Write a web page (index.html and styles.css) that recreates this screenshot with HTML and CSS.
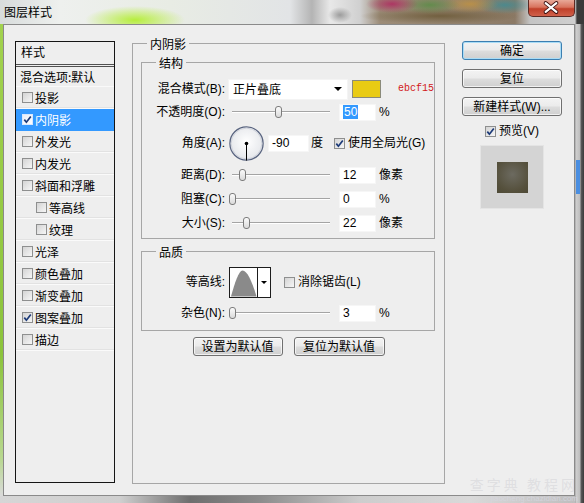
FILE: index.html
```html
<!DOCTYPE html>
<html lang="zh">
<head>
<meta charset="utf-8">
<title>图层样式</title>
<link rel="stylesheet" href="styles.css">
</head>
<body>
<div class="win">
  <div class="titlebar">
    <span class="title">图层样式</span>
    <span class="close">
      <svg width="47" height="17" viewBox="0 0 47 17">
        <path d="M18 4 L29 13 M29 4 L18 13" stroke="#3a1010" stroke-width="4" stroke-linecap="round"/>
        <path d="M18 4 L29 13 M29 4 L18 13" stroke="#ffffff" stroke-width="2.2" stroke-linecap="round"/>
      </svg>
    </span>
  </div>
  <div class="client">
    <div class="styles-panel">
      <div class="sp-head">样式</div>
      <div class="sp-blend">混合选项:默认</div>
      <div class="sp-row"><span class="cb"></span>投影</div>
      <div class="sp-row sel"><span class="cb on"><svg width="9" height="9" viewBox="0 0 9 9"><path d="M1.3 4.6 L3.4 7.2 L7.8 1.4" stroke="#1c3a78" stroke-width="1.7" fill="none"/></svg></span>内阴影</div>
      <div class="sp-row"><span class="cb"></span>外发光</div>
      <div class="sp-row"><span class="cb"></span>内发光</div>
      <div class="sp-row"><span class="cb"></span>斜面和浮雕</div>
      <div class="sp-row sub"><span class="cb"></span>等高线</div>
      <div class="sp-row sub"><span class="cb"></span>纹理</div>
      <div class="sp-row"><span class="cb"></span>光泽</div>
      <div class="sp-row"><span class="cb"></span>颜色叠加</div>
      <div class="sp-row"><span class="cb"></span>渐变叠加</div>
      <div class="sp-row"><span class="cb on"><svg width="9" height="9" viewBox="0 0 9 9"><path d="M1.3 4.6 L3.4 7.2 L7.8 1.4" stroke="#1c3a78" stroke-width="1.7" fill="none"/></svg></span>图案叠加</div>
      <div class="sp-row"><span class="cb"></span>描边</div>
    </div>

    <div class="group outer">
      <div class="legend">内阴影</div>

      <div class="group inner struct">
        <div class="legend">结构</div>

        <div class="row r-blend">
          <span class="lbl">混合模式(B):</span>
          <span class="select">正片叠底<span class="arrow"></span></span>
          <span class="swatch"></span>
          <span class="hex">ebcf15</span>
        </div>

        <div class="row r-opacity">
          <span class="lbl">不透明度(O):</span>
          <span class="slider"><span class="thumb" style="left:46px"></span></span>
          <span class="field"><span class="hl">50</span></span>
          <span class="unit">%</span>
        </div>

        <div class="row r-angle">
          <span class="lbl">角度(A):</span>
          <span class="dial">
            <svg width="35" height="35" viewBox="0 0 35 35">
              <defs>
                <radialGradient id="dg" cx="50%" cy="45%" r="55%">
                  <stop offset="0" stop-color="#ffffff"/>
                  <stop offset="1" stop-color="#e4e6ea"/>
                </radialGradient>
              </defs>
              <circle cx="17.5" cy="17.5" r="16.6" fill="url(#dg)" stroke="#5a6580" stroke-width="1.3"/>
              <circle cx="17.5" cy="17.5" r="15.4" fill="none" stroke="#c8ccd6" stroke-width="0.8"/>
              <line x1="17.5" y1="17.5" x2="17.5" y2="34.5" stroke="#000" stroke-width="1"/>
              <circle cx="17.5" cy="17.5" r="1.8" fill="#000"/>
            </svg>
          </span>
          <span class="field wide">-90</span>
          <span class="unit">度</span>
          <span class="cb on gcb"><svg width="9" height="9" viewBox="0 0 9 9"><path d="M1.3 4.6 L3.4 7.2 L7.8 1.4" stroke="#1c3a78" stroke-width="1.7" fill="none"/></svg></span>
          <span class="cbl">使用全局光(G)</span>
        </div>

        <div class="row r-std">
          <span class="lbl">距离(D):</span>
          <span class="slider"><span class="thumb" style="left:10px"></span></span>
          <span class="field">12</span>
          <span class="unit">像素</span>
        </div>

        <div class="row r-std">
          <span class="lbl">阻塞(C):</span>
          <span class="slider"><span class="thumb" style="left:0px"></span></span>
          <span class="field">0</span>
          <span class="unit">%</span>
        </div>

        <div class="row r-std">
          <span class="lbl">大小(S):</span>
          <span class="slider"><span class="thumb" style="left:14px"></span></span>
          <span class="field">22</span>
          <span class="unit">像素</span>
        </div>
      </div>

      <div class="group inner quality">
        <div class="legend">品质</div>

        <div class="row r-contour">
          <span class="lbl">等高线:</span>
          <span class="contour">
            <span class="curve">
              <svg width="28" height="28" viewBox="0 0 28 28">
                <path d="M1 28 C5 14 9 1 13 1 C18 1 23 13 27.5 28 Z" fill="#8a8a8a"/>
              </svg>
            </span>
            <span class="carrow"></span>
          </span>
          <span class="cb acb"></span>
          <span class="cbl">消除锯齿(L)</span>
        </div>

        <div class="row r-noise">
          <span class="lbl">杂色(N):</span>
          <span class="slider"><span class="thumb" style="left:0px"></span></span>
          <span class="field">3</span>
          <span class="unit">%</span>
        </div>
      </div>

      <div class="btn-row">
        <span class="btn b-def">设置为默认值</span>
        <span class="btn b-reset">复位为默认值</span>
      </div>
    </div>

    <div class="side">
      <span class="btn side-btn ok">确定</span>
      <span class="btn side-btn">复位</span>
      <span class="btn side-btn">新建样式(W)...</span>
      <div class="preview-row">
        <span class="cb on"><svg width="9" height="9" viewBox="0 0 9 9"><path d="M1.3 4.6 L3.4 7.2 L7.8 1.4" stroke="#1c3a78" stroke-width="1.7" fill="none"/></svg></span>
        <span class="cbl">预览(V)</span>
      </div>
      <div class="preview"><span class="psq"></span></div>
    </div>
  </div>
</div>
<div class="watermark">
  <span class="wm-big">查字典 教程网</span>
  <span class="wm-small">jiaocheng.chazidian.com</span>
</div>
</body>
</html>
```

FILE: styles.css
```css
* { box-sizing: border-box; margin: 0; padding: 0; }

html, body { width: 584px; height: 503px; overflow: hidden; }

body {
  position: relative;
  font-family: "Liberation Sans", "Noto Sans CJK SC", sans-serif;
  font-size: 12px;
  line-height: 1;
  color: #000;
  background:
    linear-gradient(#4a8ee0, #4a8ee0) no-repeat 576px 160px / 4px 34px,
    linear-gradient(90deg, #9a9a9a 0, #cfcfcf 1px, #bdbdbd 5px, #5a5a5a 6px, #3a3a3a 9px) no-repeat 575px 24px / 9px 479px,
    linear-gradient(90deg, #d6d6d6 0, #cfcfcf 120px, #6e6e6e 190px, #8c8c8c 260px, #cdcdcd 360px, #d9d9d9 470px, #bcbcbc 584px) no-repeat 0 496px / 584px 7px,
    linear-gradient(#a2d24e, #8cc43c 70%, #b8d890 92%, #dadada) no-repeat 0 24px / 3px 472px,
    #d8dadb;
}

.win { display: flex; flex-direction: column; width: 584px; height: 503px; }

/* ---------- title bar ---------- */
.titlebar {
  height: 24px;
  flex: none;
  display: flex;
  align-items: center;
  padding-left: 4px;
  background:
    radial-gradient(ellipse 26px 9px at 392px 4px, rgba(176, 40, 96, .85), transparent),
    radial-gradient(ellipse 30px 9px at 430px 5px, rgba(90, 140, 70, .85), transparent),
    radial-gradient(ellipse 28px 9px at 470px 4px, rgba(200, 150, 60, .7), transparent),
    radial-gradient(ellipse 30px 9px at 505px 5px, rgba(60, 140, 150, .8), transparent),
    radial-gradient(ellipse 80px 8px at 440px 16px, rgba(110, 92, 58, .9), transparent),
    radial-gradient(ellipse 12px 8px at 340px 15px, rgba(110, 110, 110, .6), transparent),
    radial-gradient(ellipse 50px 14px at 135px 20px, #b6ee3c, transparent),
    linear-gradient(90deg, #d8dcdc 0, #eef0ee 60px, #e8ece4 170px, #e2e4e6 290px, #b4b4b4 312px, #e8e8e8 330px, #d0d0d0 360px, #9c8c78 380px, #8c7a66 515px, #c4c4c4 530px, #cfcfcf 575px, #3a3a3a 577px);
}
.title { font-size: 12px; color: #000; font-family: "Noto Sans CJK SC", sans-serif; }
.close {
  margin-left: auto;
  margin-right: 9px;
  align-self: flex-start;
  width: 47px;
  height: 17px;
  border: 1px solid #5c2a24;
  border-top: 0;
  border-radius: 0 0 5px 5px;
  background: linear-gradient(#e8a898 0, #d8735e 45%, #c0402a 55%, #d0604a 100%);
  display: flex;
}
.close svg { margin: -1px 0 0 -1px; }

/* ---------- client ---------- */
.client {
  margin-left: 3px;
  width: 572px;
  height: 472px;
  border: 1px solid #8a8a8a;
  background: #eeeeee;
  display: flex;
  align-items: flex-start;
  padding: 16px 0 0 11px;
}

/* ---------- left styles list ---------- */
.styles-panel {
  flex: none;
  width: 100px;
  height: 442px;
  border: 1px solid #151515;
  font-family: "Noto Sans CJK SC", sans-serif;
}
.sp-head {
  height: 25px;
  padding: 0 0 3px 5px;
  display: flex;
  align-items: center;
  border-bottom: 3px double #505050;
}
.sp-blend {
  height: 20px;
  padding-left: 4px;
  display: flex;
  align-items: center;
  border-bottom: 1px solid #f9f9f9;
}
.sp-row {
  height: 22px;
  padding-left: 6px;
  display: flex;
  align-items: center;
  border-bottom: 1px solid #fafafa;
  box-shadow: inset 0 -1px 0 #e2e2e2;
}
.sp-row.sub { padding-left: 20px; }
.sp-row .cb { margin-right: 2px; }
.sp-row.sel { background: #3399ff; color: #fff; box-shadow: none; border-bottom-color: #3399ff; }
.sp-row.sel .cb { border-color: #d8e8ff; background: linear-gradient(135deg, #e8eef8, #ffffff); }

/* ---------- checkbox ---------- */
.cb {
  flex: none;
  width: 11px;
  height: 11px;
  border: 1px solid #8e8f8f;
  background: linear-gradient(135deg, #d4d4d4, #f6f6f6);
  display: inline-flex;
  align-items: center;
  justify-content: center;
}
.cbl { font-family: "Liberation Sans", "Noto Sans CJK SC", sans-serif; }

/* ---------- group boxes ---------- */
.group { border: 1px solid #a6a6a6; flex: none; }
.legend {
  display: block;
  width: max-content;
  height: 16px;
  line-height: 16px;
  margin: -8px 0 0 14px;
  padding: 0 3px;
  background: #eeeeee;
  font-family: "Noto Sans CJK SC", sans-serif;
}
.outer {
  margin: 2px 0 0 17px;
  width: 313px;
  height: 441px;
}
.inner { margin-left: 8px; width: 294px; }
.struct { margin-top: 10px; height: 177px; }
.quality { margin-top: 12px; height: 80px; }

/* ---------- rows ---------- */
.row { display: flex; align-items: center; }
.lbl { flex: none; width: 83px; text-align: right; white-space: nowrap; }
.r-blend { margin-top: 7px; height: 22px; }
.r-opacity { height: 24px; }
.r-angle { height: 38px; }
.r-std { height: 24px; }
.r-angle + .r-std { margin-top: 1px; }
.r-contour { margin-top: 6px; height: 32px; }
.r-noise { margin-top: 5px; height: 20px; }

.select {
  margin-left: 3px;
  width: 122px;
  height: 21px;
  background: #fff;
  border: 1px solid #f4f4f4;
  display: flex;
  align-items: center;
  padding-left: 4px;
  font-family: "Noto Sans CJK SC", sans-serif;
}
.arrow {
  margin-left: auto;
  margin-right: 5px;
  width: 0;
  height: 0;
  border-left: 4px solid transparent;
  border-right: 4px solid transparent;
  border-top: 4px solid #000;
}
.swatch {
  margin-left: 4px;
  width: 30px;
  height: 18px;
  background: #e9cb14;
  border: 1px solid #8a8a7a;
}
.hex {
  margin-left: 17px;
  font-family: "Liberation Mono", monospace;
  font-size: 10px;
  color: #d21818;
}

.slider {
  position: relative;
  flex: none;
  margin-left: 4px;
  width: 104px;
  height: 14px;
  background: linear-gradient(#a4a4a4, #a4a4a4) no-repeat 3px 6px / 98px 1px,
              linear-gradient(#ffffff, #ffffff) no-repeat 3px 7px / 98px 1px;
}
.thumb {
  position: absolute;
  top: 1px;
  width: 7px;
  height: 12px;
  border: 1px solid #7c7c7c;
  border-radius: 3px;
  background: linear-gradient(#fbfbfb, #dadada);
}
.field {
  flex: none;
  margin-left: 6px;
  width: 37px;
  height: 17px;
  background: #fff;
  border: 1px solid #f6f6f6;
  padding-left: 3px;
  display: flex;
  align-items: center;
}
.field.wide { margin-left: 4px; width: 41px; }
.hl { background: #3399ff; color: #fff; padding: 1px 1px; }
.unit { margin-left: 3px; font-family: "Liberation Sans", "Noto Sans CJK SC", sans-serif; }
.r-angle .unit { margin-left: 2px; }

.dial { flex: none; margin-left: 4px; width: 35px; height: 35px; display: flex; }
.gcb { margin-left: 11px; margin-right: 3px; }

.contour {
  flex: none;
  margin-left: 4px;
  width: 42px;
  height: 31px;
  border: 1px solid #1c1c1c;
  background: #fff;
  display: flex;
}
.curve { width: 28px; height: 29px; display: flex; align-items: flex-end; border-right: 1px solid #1c1c1c; }
.carrow {
  flex: 1;
  display: flex;
  align-items: center;
  justify-content: center;
}
.carrow::before {
  content: "";
  width: 0;
  height: 0;
  border-left: 3px solid transparent;
  border-right: 3px solid transparent;
  border-top: 3px solid #000;
}
.acb { margin-left: 13px; margin-right: 3px; }

/* ---------- buttons ---------- */
.btn {
  display: flex;
  align-items: center;
  justify-content: center;
  height: 19px;
  border: 1px solid #707070;
  border-radius: 3px;
  background: linear-gradient(#f3f3f3 0, #ebebeb 48%, #dddddd 52%, #cfcfcf 100%);
  box-shadow: inset 0 0 0 1px rgba(255, 255, 255, .7);
  font-family: "Liberation Sans", "Noto Sans CJK SC", sans-serif;
  white-space: nowrap;
}
.btn-row { margin-top: 6px; display: flex; justify-content: center; gap: 11px; }
.b-def { width: 90px; }
.b-reset { width: 91px; }

.side {
  flex: none;
  margin-left: 17px;
  width: 100px;
  display: flex;
  flex-direction: column;
  align-items: center;
}
.side-btn { width: 100px; margin-bottom: 9px; }
.side-btn.ok {
  border-color: #3c7fb1;
  box-shadow: inset 0 0 0 1px #a9dcf6;
}
.preview-row {
  margin-top: -1px;
  height: 14px;
  display: flex;
  align-items: center;
  gap: 3px;
}
.preview {
  margin-top: 7px;
  width: 64px;
  height: 64px;
  background: #d4d4d4;
  border: 1px solid #e4e4e4;
  display: flex;
  align-items: center;
  justify-content: center;
}
.psq {
  width: 31px;
  height: 31px;
  background: radial-gradient(circle at 50% 40%, #6c6a60, #55503c 70%, #4e4a36);
}

/* ---------- watermark ---------- */
.watermark {
  position: absolute;
  right: 6px;
  bottom: 0;
  display: flex;
  flex-direction: column;
  align-items: flex-end;
  gap: 1px;
  font-family: "Noto Sans CJK SC", sans-serif;
  pointer-events: none;
}
.wm-big { font-size: 14px; line-height: 17px; color: rgba(210, 210, 215, .55); letter-spacing: 3px; }
.wm-small { font-size: 8px; line-height: 9px; color: rgba(215, 215, 225, .8); font-family: "Liberation Sans", sans-serif; }
```
